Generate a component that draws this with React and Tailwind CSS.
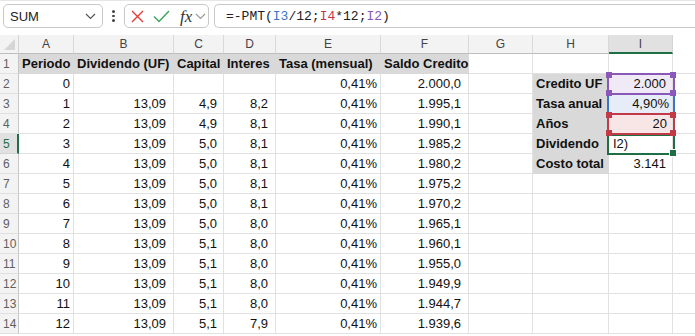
import React from "react";

const COLS = [
  { key: "A", w: 55 },
  { key: "B", w: 100 },
  { key: "C", w: 50 },
  { key: "D", w: 52 },
  { key: "E", w: 105 },
  { key: "F", w: 88 },
  { key: "G", w: 64 },
  { key: "H", w: 76 },
  { key: "I", w: 64 },
  { key: "J", w: 40 },
];

const data = [
  ["0", "", "", "", "0,41%", "2.000,0"],
  ["1", "13,09", "4,9", "8,2", "0,41%", "1.995,1"],
  ["2", "13,09", "4,9", "8,1", "0,41%", "1.990,1"],
  ["3", "13,09", "5,0", "8,1", "0,41%", "1.985,2"],
  ["4", "13,09", "5,0", "8,1", "0,41%", "1.980,2"],
  ["5", "13,09", "5,0", "8,1", "0,41%", "1.975,2"],
  ["6", "13,09", "5,0", "8,1", "0,41%", "1.970,2"],
  ["7", "13,09", "5,0", "8,0", "0,41%", "1.965,1"],
  ["8", "13,09", "5,1", "8,0", "0,41%", "1.960,1"],
  ["9", "13,09", "5,1", "8,0", "0,41%", "1.955,0"],
  ["10", "13,09", "5,1", "8,0", "0,41%", "1.949,9"],
  ["11", "13,09", "5,1", "8,0", "0,41%", "1.944,7"],
  ["12", "13,09", "5,1", "7,9", "0,41%", "1.939,6"],
];

const headers = ["Periodo", "Dividendo (UF)", "Capital", "Interes", "Tasa (mensual)", "Saldo Credito"];
const padR = ["pr-[3px]", "pr-[7px]", "pr-[6px]", "pr-[7px]", "pr-[3px]", "pr-[7px]"];

const side = {
  2: { label: "Credito UF", value: "2.000", bg: "bg-[#efeaf6]", pad: "pr-[6px]" },
  3: { label: "Tasa anual", value: "4,90%", bg: "bg-[#e6edf8]", pad: "pr-[3px]" },
  4: { label: "Años", value: "20", bg: "bg-[#f8e6e6]", pad: "pr-[5px]" },
  5: { label: "Dividendo", value: "I2)", bg: "bg-white", pad: "", left: true },
  6: { label: "Costo total", value: "3.141", bg: "bg-white", pad: "pr-[6px]" },
};

function Chevron({ className }) {
  return (
    <svg className={className} width="11" height="7" viewBox="0 0 11 7" fill="none">
      <path d="M1 1l4.5 4.5L10 1" stroke="currentColor" strokeWidth="1.2" />
    </svg>
  );
}

function Cell({ w, className = "", children }) {
  return (
    <div
      style={{ width: w }}
      className={`h-full shrink-0 border-r border-b flex items-center overflow-visible whitespace-nowrap ${className}`}
    >
      {children}
    </div>
  );
}

function Handle({ className }) {
  return <div className={`absolute w-[6px] h-[6px] ${className}`} />;
}

export default function App() {
  const rows = [];
  for (let r = 1; r <= 14; r++) {
    const cells = [];
    COLS.forEach((c, ci) => {
      let cls = "border-[#e1e1e1] bg-white";
      let content = null;
      if (ci < 6) {
        if (r === 1) {
          cls = "border-[#d9d9d9] bg-[#d9d9d9] font-bold justify-start pl-[3px] text-[#111]";
          content = headers[ci];
        } else {
          const v = data[r - 2][ci];
          cls = `border-[#e1e1e1] bg-white justify-end ${padR[ci]} text-[#111]`;
          content = v;
        }
      } else if (c.key === "H" && side[r]) {
        cls = "border-[#d9d9d9] bg-[#d9d9d9] font-bold justify-start pl-[3px] text-[#111]";
        content = side[r].label;
      } else if (c.key === "I" && side[r]) {
        const s = side[r];
        cls = `border-[#e1e1e1] ${s.bg} ${s.left ? "justify-start pl-[4px]" : "justify-end " + s.pad} text-[#111]`;
        content = s.value;
      }
      cells.push(
        <Cell key={c.key} w={c.w} className={cls}>
          {content}
        </Cell>
      );
    });
    rows.push(
      <div key={r} className="flex h-[20px]">
        <div
          className={`w-[19px] shrink-0 h-full border-b flex items-center pl-[3px] text-[12px] ${
            r === 5
              ? "bg-[#e1e1e1] border-r-2 border-r-[#1e6f44] border-b-[#d4d4d4] text-[#1e6f44]"
              : "bg-[#f3f3f3] border-r border-r-[#c6c6c6] border-b-[#e0e0e0] text-[#5f5f5f]"
          }`}
        >
          {r}
        </div>
        {cells}
      </div>
    );
  }

  return (
    <div
      className="relative w-[695px] h-[336px] overflow-hidden bg-white text-[13px] leading-none"
      style={{ fontFamily: '"Liberation Sans", Arial, sans-serif' }}
    >
      {/* Formula bar */}
      <div className="flex items-start h-[35px] pt-[3px] pl-[3px] border-t border-[#e6e6e6]">
        <div className="w-[100px] h-[24px] border border-[#c8c8c8] rounded-[5px] flex items-center pl-[6px] pr-[6px] justify-between text-[13px] text-[#222]">
          <span>SUM</span>
          <Chevron className="text-[#555]" />
        </div>
        <div className="w-[21px] h-[24px] flex flex-col items-center justify-center gap-[2px]">
          <span className="w-[2.5px] h-[2.5px] bg-[#444] rounded-full" />
          <span className="w-[2.5px] h-[2.5px] bg-[#444] rounded-full" />
          <span className="w-[2.5px] h-[2.5px] bg-[#444] rounded-full" />
        </div>
        <div className="w-[85px] h-[24px] border border-[#c8c8c8] rounded-[5px] flex items-center pl-[6px]">
          <svg width="13" height="13" viewBox="0 0 13 13">
            <path d="M1 1l11 11M12 1L1 12" stroke="#e23c3c" strokeWidth="1.4" />
          </svg>
          <svg width="17" height="13" viewBox="0 0 17 13" className="ml-[9px]">
            <path d="M1 6.5l5 5L16 1" stroke="#3aa35a" strokeWidth="1.4" fill="none" />
          </svg>
          <span
            className="ml-[10px] text-[17px] italic text-[#333]"
            style={{ fontFamily: '"Liberation Serif", "Times New Roman", serif' }}
          >
            fx
          </span>
          <Chevron className="ml-[3px] text-[#9a9a9a]" />
        </div>
        <div
          className="ml-[5px] flex-1 h-[24px] border border-r-0 border-[#c8c8c8] rounded-l-[5px] flex items-center pl-[11px] text-[13px] text-[#222]"
          style={{ fontFamily: '"Liberation Mono", "Courier New", monospace' }}
        >
          <span>=-PMT(</span>
          <span className="text-[#3b74c8]">I3</span>
          <span>/12;</span>
          <span className="text-[#c23a48]">I4</span>
          <span>*12;</span>
          <span className="text-[#8a58b8]">I2</span>
          <span>)</span>
        </div>
      </div>

      {/* Column headers */}
      <div className="flex h-[19px] text-[12px] text-[#444]">
        <div className="w-[19px] shrink-0 h-full bg-[#f3f3f3] border-r border-b border-r-[#d4d4d4] border-b-[#bdbdbd] relative">
          <div
            className="absolute right-[3px] bottom-[3px] w-[11px] h-[11px] bg-[#d6d6d6]"
            style={{ clipPath: "polygon(100% 0, 100% 100%, 0 100%)" }}
          />
        </div>
        {COLS.map((c) => {
          if (c.key === "J") {
            return <div key={c.key} style={{ width: c.w }} className="shrink-0 h-full bg-white" />;
          }
          return (
            <div
              key={c.key}
              style={{ width: c.w }}
              className={`shrink-0 h-full border-r flex items-center justify-center ${
                c.key === "I"
                  ? "bg-[#e1e1e1] border-r-[#d4d4d4] border-b-2 border-b-[#1e6f44]"
                  : "bg-[#f3f3f3] border-r-[#d9d9d9] border-b border-b-[#bdbdbd]"
              }`}
            >
              {c.key}
            </div>
          );
        })}
      </div>

      {/* Grid */}
      <div>{rows}</div>

      {/* Range highlights */}
      <div className="absolute left-[607px] top-[93px] w-[68px] h-[22px] border-2 border-[#3b74c8]" />
      <div className="absolute left-[607px] top-[134px] w-[68px] h-[21px] border-2 border-[#1e6f44]">
        <div className="absolute right-[-4px] bottom-[-4px] w-[6px] h-[6px] bg-[#1e6f44] border border-white box-content" />
      </div>
      <div className="absolute left-[607px] top-[113px] w-[68px] h-[22px] border-2 border-[#c23a48]">
        <Handle className="bg-[#c23a48] left-[-3px] top-[-3px]" />
        <Handle className="bg-[#c23a48] right-[-3px] top-[-3px]" />
        <Handle className="bg-[#c23a48] left-[-3px] bottom-[-3px]" />
        <Handle className="bg-[#c23a48] right-[-3px] bottom-[-3px]" />
      </div>
      <div className="absolute left-[607px] top-[73px] w-[68px] h-[22px] border-2 border-[#8a58b8]">
        <Handle className="bg-[#8a58b8] left-[-3px] top-[-3px]" />
        <Handle className="bg-[#8a58b8] right-[-3px] top-[-3px]" />
        <Handle className="bg-[#8a58b8] left-[-3px] bottom-[-3px]" />
        <Handle className="bg-[#8a58b8] right-[-3px] bottom-[-3px]" />
      </div>
    </div>
  );
}
